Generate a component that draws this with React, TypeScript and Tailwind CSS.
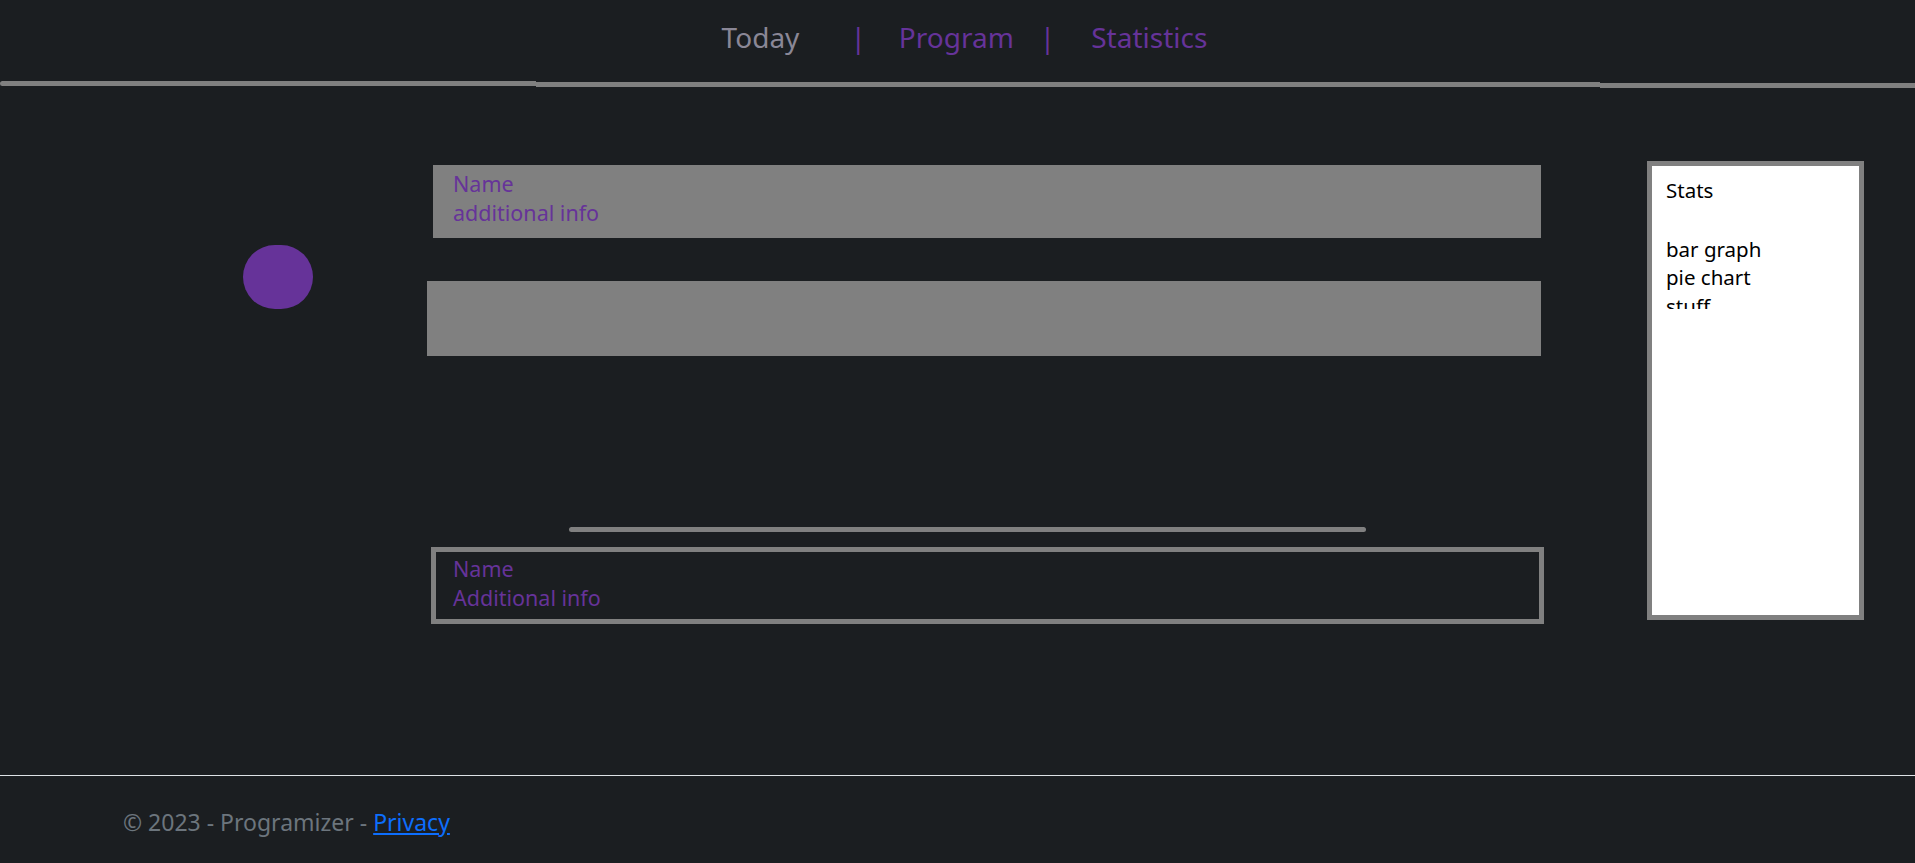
export default function App() {
  return (
    <div
      className="min-h-[863px] bg-[#1b1e21] flex flex-col"
      style={{ fontFamily: '"Noto Sans", "Open Sans", sans-serif' }}
    >
      {/* header nav */}
      <header className="h-[81px] flex items-center justify-center pl-[14px] pb-[8px] text-[28px]">
        <a className="text-[#8a8796]">Today</a>
        <span className="ml-[51px] text-[#663399]">|</span>
        <a className="ml-[33px] text-[#663399]">Program</a>
        <span className="ml-[26px] text-[#663399]">|</span>
        <a className="ml-[36px] text-[#663399]">Statistics</a>
      </header>
      <div className="flex items-start">
        <div className="w-[536px] h-[5px] bg-[#808080] rounded-l-full" />
        <div className="flex-1 h-[5px] mt-[1px] bg-[#808080]" />
        <div className="w-[315px] h-[5px] mt-[2px] bg-[#808080]" />
      </div>

      <main className="flex-1 grid grid-cols-[431px_1113px_1fr]">
        <div>
          <div className="ml-[243px] mt-[157px] w-[70px] h-[64px] rounded-full bg-[#663399]" />
        </div>

        <div className="flex flex-col text-[21.5px] leading-[28.5px]">
          <div className="ml-[2px] mt-[77px] w-[1108px] h-[73px] bg-[#808080] px-[20px] pt-[5px] text-[#663399]">
            <div>Name</div>
            <div>additional info</div>
          </div>
          <div className="ml-[-4px] mt-[43px] w-[1114px] h-[75px] bg-[#808080]" />
          <div className="ml-[138px] mt-[171px] w-[797px] h-[5px] rounded-full bg-[#808080]" />
          <div className="mt-[15px] h-[77px] border-[5px] border-[#808080] px-[17px] pt-[3px] text-[#663399]">
            <div>Name</div>
            <div>Additional info</div>
          </div>
        </div>

        <div>
          <div className="ml-[103px] mt-[73px] w-[217px] h-[459px] border-[5px] border-[#808080] bg-white">
            <div className="mx-[14px] mt-[10px] h-[133px] overflow-hidden text-black text-[20.5px] leading-[28.5px]">
              <div>Stats</div>
              <div className="h-[30px]" />
              <div>bar graph</div>
              <div>pie chart</div>
              <div>stuff</div>
            </div>
          </div>
        </div>
      </main>

      <footer className="h-[88px] border-t border-[#dee2e6] flex items-center pl-[123px] pt-[5px] text-[23px] text-[#6c757d]">
        <span>
          © 2023 - Programizer -{" "}
          <a href="#" className="text-[#0d6efd] underline">
            Privacy
          </a>
        </span>
      </footer>
    </div>
  );
}
